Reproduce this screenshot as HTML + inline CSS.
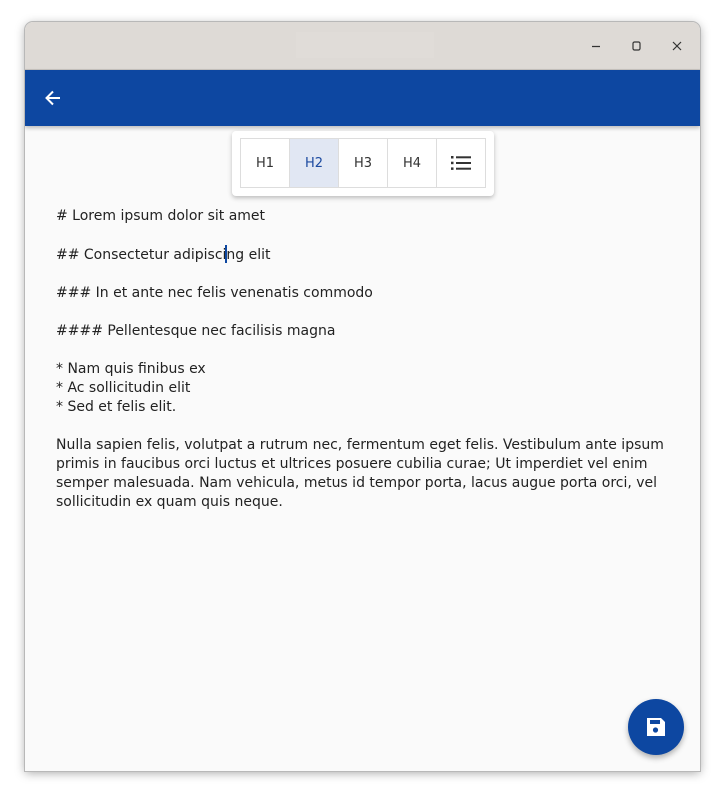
<!DOCTYPE html>
<html><head><meta charset="utf-8"><style>
html,body{margin:0;padding:0;width:726px;height:800px;background:#fff;overflow:hidden;font-family:"Liberation Sans",sans-serif}
.win{position:absolute;left:25px;top:22px;width:675px;height:749px;background:#fafafa;border-radius:8px 8px 0 0;box-shadow:0 2px 10px rgba(0,0,0,.35);overflow:hidden;outline:1px solid #b8b8b8}
.title{position:absolute;left:0;top:0;width:675px;height:47px;background:#dedad6;border-bottom:1px solid #c8c4c0}
.tb{position:absolute;left:271px;top:10px;width:138px;height:26px;background:#e0dcd8}
.app{position:absolute;left:0;top:48px;width:675px;height:56px;background:#0d47a1;box-shadow:0 2px 4px rgba(0,0,0,.25)}
.card{position:absolute;left:207px;top:109px;width:262px;height:65px;background:#fff;border-radius:4px;box-shadow:0 2px 5px rgba(0,0,0,.25)}
.btns{position:absolute;left:8px;top:7px;display:flex;border:1px solid #ddd}
.b{width:48px;height:48px;border-right:1px solid #ddd;display:flex;align-items:center;justify-content:center;font-size:13px;color:#333;font-family:"DejaVu Sans",sans-serif}
.b:last-child{border-right:0}
.b.on{background:#e1e7f3;color:#1c4aa0}
.txt{position:absolute;left:31px;top:185px;font-family:"DejaVu Sans",sans-serif;font-size:14px;line-height:19px;color:#222;width:614px}
.txt p{margin:0 0 19px}
.cur{display:inline-block;width:2px;height:18px;background:#0d47a1;vertical-align:-4px;margin:0 -1px}
.fab{position:absolute;left:628px;top:699px;width:56px;height:56px;border-radius:50%;background:#0d47a1;box-shadow:0 3px 6px rgba(0,0,0,.3);display:flex;align-items:center;justify-content:center}
</style></head><body>
<div class="win">
<div class="title"><div class="tb"></div>
<svg style="position:absolute;left:560px;top:15px" width="100" height="18"><g stroke="#333" stroke-width="1.2" fill="none"><line x1="7" y1="9.5" x2="15" y2="9.5"/><rect x="48" y="5" width="7" height="8" rx="1.5"/><line x1="88" y1="5" x2="96" y2="13"/><line x1="96" y1="5" x2="88" y2="13"/></g></svg>
</div>
<div class="app"><svg style="position:absolute;left:19px;top:19px" width="18" height="18" viewBox="0 0 18 18"><path d="M16 9H3M9 2.5L2.5 9 9 15.5" stroke="#fff" stroke-width="2" fill="none"/></svg></div>
<div class="card"><div class="btns">
<div class="b">H1</div><div class="b on">H2</div><div class="b">H3</div><div class="b">H4</div>
<div class="b"><svg width="20" height="16" viewBox="0 0 20 16"><g fill="#333"><rect x="0" y="1" width="2.5" height="2.5"/><rect x="0" y="6.7" width="2.5" height="2.5"/><rect x="0" y="12.4" width="2.5" height="2.5"/><rect x="5" y="1.3" width="15" height="2"/><rect x="5" y="7" width="15" height="2"/><rect x="5" y="12.7" width="15" height="2"/></g></svg></div>
</div></div>
<div class="txt">
<p># Lorem ipsum dolor sit amet</p>
<p>## Consectetur adipisci<span class="cur"></span>ng elit</p>
<p>### In et ante nec felis venenatis commodo</p>
<p>#### Pellentesque nec facilisis magna</p>
<p>* Nam quis finibus ex<br>* Ac sollicitudin elit<br>* Sed et felis elit.</p>
<p>Nulla sapien felis, volutpat a rutrum nec, fermentum eget felis. Vestibulum ante ipsum primis in faucibus orci luctus et ultrices posuere cubilia curae; Ut imperdiet vel enim semper malesuada. Nam vehicula, metus id tempor porta, lacus augue porta orci, vel sollicitudin ex quam quis neque.</p>
</div>
</div>
<div class="fab"><svg width="20" height="20" viewBox="0 0 20 20"><path d="M1 1H15L19 5V19H1Z" fill="#fff"/><rect x="4" y="3" width="10" height="4" fill="#0d47a1"/><circle cx="9.5" cy="13" r="2.6" fill="#0d47a1"/></svg></div>
</body></html>
